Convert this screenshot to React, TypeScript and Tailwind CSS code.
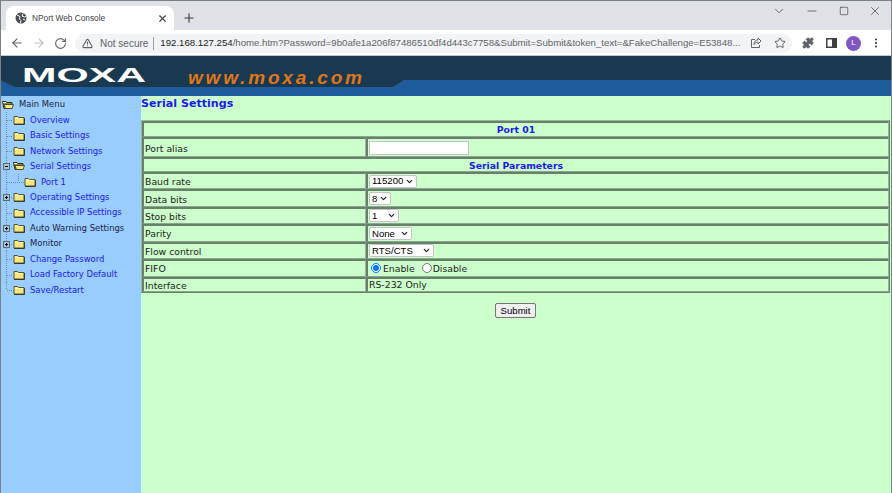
import { ArrowLeft, ArrowRight, ChevronDown, Minus, MoreVertical, Plus, Puzzle, RotateCw, Square, Star, TriangleAlert, X } from 'lucide-react';

const FolderIcon = ({ open }: { open?: boolean }) => (
  <svg width="12" height="10" viewBox="0 0 12 10" className="shrink-0">
    {open ? (
      <>
        <path d="M0.5 1.5 H4 L5 2.5 H10 V8.5 H2 Z" fill="#8f8a45" stroke="#2a2a1a" />
        <path d="M2 4.5 H11.5 L10 8.5 H3.5 Z" fill="#f6e981" stroke="#4d4a24" />
        <path d="M1 2.5 H4" stroke="#fff7c0" />
      </>
    ) : (
      <>
        <path d="M1 1.5 H4.5 L5.5 2.5 H11 V9 H1 Z" fill="#f6e77c" stroke="#4a4620" strokeWidth="0.9" />
        <path d="M2 3.5 H10" stroke="#fff7b8" />
        <path d="M1 9.5 H11.5 V3" stroke="#3a3a30" fill="none" />
      </>
    )}
  </svg>
);

type TreeItem = {
  label: string;
  expander?: '+' | '-';
  open?: boolean;
  dark?: boolean;
  last?: boolean;
  child?: boolean;
};

const treeItems: TreeItem[] = [
  { label: 'Overview' },
  { label: 'Basic Settings' },
  { label: 'Network Settings' },
  { label: 'Serial Settings', expander: '-', open: true },
  { label: 'Port 1', child: true },
  { label: 'Operating Settings', expander: '+' },
  { label: 'Accessible IP Settings' },
  { label: 'Auto Warning Settings', expander: '+', dark: true },
  { label: 'Monitor', expander: '+', dark: true },
  { label: 'Change Password' },
  { label: 'Load Factory Default' },
  { label: 'Save/Restart', last: true },
];

const TreeRow = ({ item }: { item: TreeItem }) => (
  <div className="flex h-[15.45px] items-center">
    <svg width="12" height="16" viewBox="0 0 12 16" className="shrink-0">
      <path d={item.last ? 'M5.5 0 V8' : 'M5.5 0 V16'} stroke="#6f8aa8" strokeDasharray="1 1" />
      <path d="M6 8.5 H12" stroke="#6f8aa8" strokeDasharray="1 1" />
      {item.expander && (
        <>
          <rect x="2.5" y="5.5" width="6" height="6" fill="#a9c4de" stroke="#5c6a78" />
          <path d="M4 8.5 H7" stroke="#000" />
          {item.expander === '+' && <path d="M5.5 7 V10" stroke="#000" />}
        </>
      )}
    </svg>
    {item.child && (
      <svg width="11" height="16" viewBox="0 0 11 16" className="shrink-0">
        <path d="M0 8.5 H11 M5.5 0 V8" stroke="#6f8aa8" strokeDasharray="1 1" />
      </svg>
    )}
    <FolderIcon open={item.open} />
    <span className={`ml-[5px] whitespace-nowrap text-[8.45px] ${item.dark ? 'text-[#222244]' : 'text-[#1a1aee]'}`}>{item.label}</span>
  </div>
);

const Sidebar = () => (
  <aside className="w-[140px] shrink-0 bg-[#99ccff] pt-[1px] font-['DejaVu_Sans',sans-serif]">
    <div className="flex h-[15.45px] items-center pl-[1px]">
      <FolderIcon open />
      <span className="ml-[5px] text-[8.45px] text-[#222233]">Main Menu</span>
    </div>
    {treeItems.map((item) => (
      <TreeRow key={item.label} item={item} />
    ))}
  </aside>
);

const cellClass = 'border-t-2 border-l-2 border-r border-b border-t-[#66806a] border-l-[#66806a] border-r-[#9ab59e] border-b-[#8aa58e] p-0 align-middle text-[9.3px] leading-[11px]';

const HeadRow = ({ title, h }: { title: string; h: string }) => (
  <tr className={h}>
    <td colSpan={2} className={`${cellClass} text-center font-bold text-[#1a1aee]`}>
      {title}
    </td>
  </tr>
);

const Row = ({ label, h, children }: { label: string; h: string; children: React.ReactNode }) => (
  <tr className={h}>
    <td className={`${cellClass} w-[224px] pt-[1px] pl-[1px] text-[#222]`}>{label}</td>
    <td className={`${cellClass} text-[#222]`}>{children}</td>
  </tr>
);

const Pick = ({ value, w }: { value: string; w: string }) => (
  <div className={`${w} relative h-[13px] rounded-[2px] border border-[#c4c4c4] bg-white`}>
    <select
      defaultValue={value}
      className="block h-full w-full appearance-none pl-[2px] font-['Liberation_Sans',sans-serif] text-[9.6px] leading-none text-black"
    >
      <option>{value}</option>
    </select>
    <ChevronDown size={9} strokeWidth={3.2} className="pointer-events-none absolute top-[1px] right-[2px] text-[#222]" />
  </div>
);

const SerialForm = () => (
  <main className="flex-1 bg-[#ccffcc] font-['DejaVu_Sans',sans-serif]">
    <h1 className="h-[24px] text-[11.1px] leading-[15px] font-bold text-[#1a1aee]">Serial Settings</h1>
    <table className="w-[749px] border-separate border-spacing-0 border border-t-[#9ab59e] border-l-[#9ab59e] border-r-[#66806a] border-b-[#66806a]">
      <tbody>
        <HeadRow title="Port 01" h="h-[16px]" />
        <Row label="Port alias" h="h-[20px]">
          <input className="ml-[1px] block h-[14px] w-[100px] border border-[#c4c4c4] bg-white" readOnly />
        </Row>
        <HeadRow title="Serial Parameters" h="h-[15px]" />
        <Row label="Baud rate" h="h-[17.4px]"><Pick value="115200" w="ml-[1px] w-[48px]" /></Row>
        <Row label="Data bits" h="h-[17.4px]"><Pick value="8" w="ml-[1px] w-[22px]" /></Row>
        <Row label="Stop bits" h="h-[17.4px]"><Pick value="1" w="ml-[1px] w-[30px]" /></Row>
        <Row label="Parity" h="h-[17.4px]"><Pick value="None" w="ml-[1px] w-[43px]" /></Row>
        <Row label="Flow control" h="h-[17.4px]"><Pick value="RTS/CTS" w="ml-[1px] w-[65px]" /></Row>
        <Row label="FIFO" h="h-[18px]">
          <div className="ml-[3px] flex items-center">
            <input type="radio" name="fifo" defaultChecked className="m-0 h-[10px] w-[10px] accent-[#0075ff]" />
            <span className="ml-[2px] pt-[1px]">Enable</span>
            <input type="radio" name="fifo" className="ml-[7px] h-[10px] w-[10px]" />
            <span className="ml-[1px] pt-[1px]">Disable</span>
          </div>
        </Row>
        <Row label="Interface" h="h-[15px]"><span className="pl-[1px]">RS-232 Only</span></Row>
      </tbody>
    </table>
    <div className="mt-[10px] flex w-[749px] justify-center">
      <button className="h-[15px] w-[41px] rounded-[2px] border border-[#767676] bg-[#efefef] font-['Liberation_Sans',sans-serif] text-[9.6px] leading-none text-black">
        Submit
      </button>
    </div>
  </main>
);

const Browser = () => (
  <div className="font-['Liberation_Sans',sans-serif]">
    <div className="flex h-[30px] items-end border-t border-[#7b8085] bg-[#dee1e6] pl-[5px]">
      <div className="flex h-[24px] w-[168px] items-center rounded-t-[8px] bg-white pr-[6px] pl-[9px]">
        <svg width="12" height="12" viewBox="0 0 12 12" className="shrink-0">
          <circle cx="6" cy="6" r="5.5" fill="#4a4d51" />
          <path d="M2 3 L5 4.5 L4.5 7 L6 8.5 L5.5 11 M8 1.5 L7 4 L9.5 5 L11 4.5 M8 7 L10 8" stroke="#fff" strokeWidth="1" fill="none" />
        </svg>
        <span className="ml-[5px] flex-1 text-[8.3px] text-[#3c4043]">NPort Web Console</span>
        <X size={11} strokeWidth={2.4} className="text-[#3c4043]" />
      </div>
      <div className="mb-[5px] ml-[8px]">
        <Plus size={14} strokeWidth={2} className="text-[#3c4043]" />
      </div>
      <div className="mb-[12px] ml-auto flex items-center gap-[19.4px] pr-[9px] text-[#3c4043]">
        <ChevronDown size={14} strokeWidth={1.2} />
        <Minus size={14} strokeWidth={1.2} />
        <Square size={10} strokeWidth={1.6} />
        <X size={14} strokeWidth={1.2} />
      </div>
    </div>
    <div className="flex h-[26px] items-center border-b border-[#c4c7cb] bg-white pt-[1px] pl-[9px]">
      <ArrowLeft size={14} strokeWidth={2} className="text-[#5f6368]" />
      <ArrowRight size={14} strokeWidth={2} className="ml-[8px] text-[#bcbfc3]" />
      <RotateCw size={13} strokeWidth={2} className="ml-[8px] text-[#5f6368]" />
      <div className="ml-[8px] flex h-[19px] w-[717px] items-center rounded-full bg-[#f1f3f4] pr-[6px] pl-[7px]">
        <TriangleAlert size={11} strokeWidth={2.4} className="shrink-0 text-[#5f6368]" />
        <span className="ml-[7px] shrink-0 text-[10px] text-[#5f6368]">Not secure</span>
        <span className="mr-[6px] ml-[5px] h-[13px] w-px shrink-0 bg-[#9aa0a6]" />
        <span className="flex-1 whitespace-nowrap text-[9.65px] text-[#5f6368]">
          <span className="text-[#202124]">192.168.127.254</span>/home.htm?Password=9b0afe1a206f87486510df4d443c7758&Submit=Submit&token_text=&FakeChallenge=E53848...
        </span>
        <svg width="12" height="12" viewBox="0 0 12 12" fill="none" stroke="#5f6368" strokeWidth="1" className="ml-[6px] shrink-0">
          <path d="M5 2.5 H1.5 V10.5 H9.5 V8" />
          <path d="M8 1 L11 4 L8 7 V5.3 C6 5.3 4.8 6 4 7.5 C4 5 5.5 3 8 2.8 Z" />
        </svg>
        <Star size={12} strokeWidth={1.6} className="ml-[12px] shrink-0 text-[#3c4043]" />
      </div>
      <Puzzle size={12} className="ml-[10px] fill-[#5f6368] text-[#5f6368]" />
      <svg width="11" height="10" viewBox="0 0 11 10" className="ml-[12px]">
        <rect x="0.75" y="0.75" width="9.5" height="8.5" fill="none" stroke="#3c4043" strokeWidth="1.5" />
        <rect x="6" y="0.75" width="4.5" height="8.5" fill="#3c4043" />
      </svg>
      <span className="ml-[9px] flex h-[15px] w-[15px] items-center justify-center rounded-full bg-[#7e57c2] text-[8px] text-white">L</span>
      <MoreVertical size={12} strokeWidth={2.4} className="ml-[9px] text-[#3c4043]" />
    </div>
  </div>
);

const Banner = () => (
  <header className="h-[40px] bg-[#1f5c9c]">
    <svg width="890" height="40" viewBox="1 0 890 40" className="block">
      <path d="M0 0 H892 V24 H404 L393 31 H15 L0 24 Z" fill="#18394f" />
      <text x="22" y="25.5" textLength="124" lengthAdjust="spacingAndGlyphs" fontFamily="Liberation Sans" fontWeight="700" fontSize="19.5" fill="#ffffff">MOXA</text>
      <text x="188" y="28" textLength="174" fontFamily="Liberation Sans" fontStyle="italic" fontWeight="700" fontSize="19" fill="#e0761c">www.moxa.com</text>
    </svg>
  </header>
);

const App = () => {
  return (
    <div className="flex h-[493px] w-[892px] flex-col overflow-hidden border-x border-[#7b8085]">
      <Browser />
      <Banner />
      <div className="flex flex-1">
        <Sidebar />
        <SerialForm />
      </div>
    </div>
  );
};

export default App;
